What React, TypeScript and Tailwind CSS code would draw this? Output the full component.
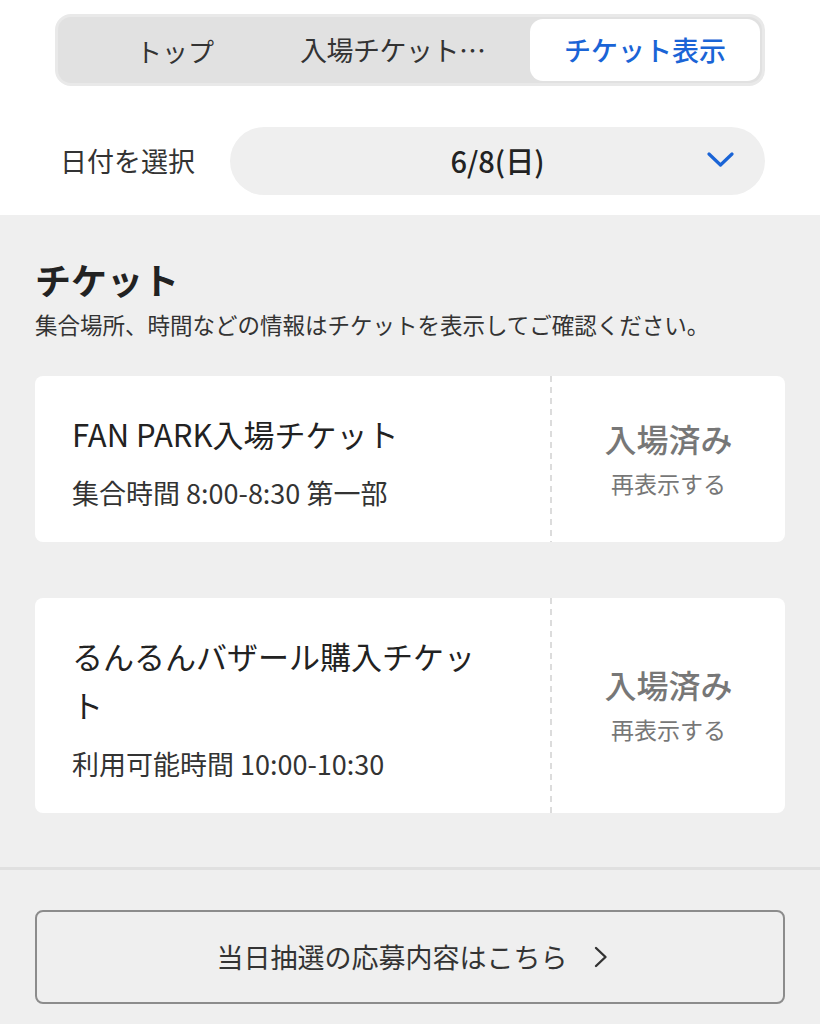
// チケット表示画面 — 日付ごとのチケット一覧

type Ticket = {
	id: string;
	title: string;
	sub: string;
	status: string;
};

const TICKETS: Ticket[] = [
	{
		id: "fanpark",
		title: "FAN PARK入場チケット",
		sub: "集合時間 8:00-8:30 第一部",
		status: "入場済み",
	},
	{
		id: "bazaar",
		title: "るんるんバザール購入チケット",
		sub: "利用可能時間 10:00-10:30",
		status: "入場済み",
	},
];

const FONT = "font-['Noto_Sans_CJK_JP','Noto_Sans',sans-serif]";

export default function App() {
	return (
		<div className={`${FONT} min-h-[1024px] w-[820px] bg-[#efefef] text-[#333]`}>
			{/* Header: tabs + date picker */}
			<div className="bg-white px-[55px] pt-[14px] pb-[20px]">
				<div className="flex h-[72px] rounded-[16px] border-[3px] border-[#e9e9e9] bg-[#e1e1e1] p-[2px]">
					<button className="flex-1 text-[26px] text-[#333]">トップ</button>
					<button className="flex-1 pl-[10px] text-left text-[27px] tracking-[-0.5px] text-[#333]">
						入場チケット…
					</button>
					<button className="flex-1 rounded-[13px] bg-white text-[27px] font-medium text-[#1a64d6]">
						チケット表示
					</button>
				</div>

				<div className="mt-[41px] flex items-center">
					<span className="-ml-[50px] w-[225px] pl-[55px] text-[27px] text-[#333]">
						日付を選択
					</span>
					<div className="relative flex h-[68px] flex-1 items-center justify-center rounded-full bg-[#efefef]">
						<span className="text-[29px] font-medium text-[#222]">6/8(日)</span>
						<svg
							width="27"
							height="16"
							viewBox="0 0 27 16"
							className="absolute right-[31px] top-[25px]"
						>
							<polyline
								points="2,2 13.5,13 25,2"
								fill="none"
								stroke="#1a64d6"
								strokeWidth="3.2"
								strokeLinecap="round"
								strokeLinejoin="round"
							/>
						</svg>
					</div>
				</div>
			</div>

			{/* Ticket list */}
			<div className="px-[35px] pt-[38px]">
				<h2 className="text-[36px] font-bold leading-[52px] text-[#222]">チケット</h2>
				<p className="mt-[3px] text-[22.5px] leading-[33px] text-[#333]">
					集合場所、時間などの情報はチケットを表示してご確認ください。
				</p>

				<div className="mt-[35px] flex flex-col gap-[56px]">
					{TICKETS.map((t) => (
						<TicketCard key={t.id} ticket={t} />
					))}
				</div>
			</div>

			<div className="mt-[54px] h-[3px] bg-[#e0e0e0]" />

			<div className="px-[35px] pt-[40px] pb-[20px]">
				<button className="flex h-[94px] w-full items-center justify-center gap-[26px] rounded-[8px] border-2 border-[#8c8c8c] pl-[4px] text-[27px] text-[#333]">
					<span>当日抽選の応募内容はこちら</span>
					<svg width="14" height="22" viewBox="0 0 14 22">
						<polyline
							points="2,2 11.5,11 2,20"
							fill="none"
							stroke="#333"
							strokeWidth="2.4"
							strokeLinecap="round"
							strokeLinejoin="round"
						/>
					</svg>
				</button>
			</div>
		</div>
	);
}

function TicketCard({ ticket }: { ticket: Ticket }) {
	return (
		<div className="flex rounded-[8px] bg-white">
			<div className="w-[515px] pl-[37px] pt-[33px] pb-[30px]">
				<p className="w-[415px] text-[31px] leading-[49px] text-[#222]">{ticket.title}</p>
				<p className="mt-[15px] text-[27px] leading-[39px] text-[#333]">{ticket.sub}</p>
			</div>
			<div className="w-[2px] bg-[repeating-linear-gradient(to_bottom,#dcdcdc_0,#dcdcdc_6px,transparent_6px,transparent_11px)]" />
			<div className="flex flex-1 flex-col items-center justify-center pt-[2px]">
				<span className="text-[32px] font-medium leading-[44px] text-[#777]">
					{ticket.status}
				</span>
				<span className="mt-[1px] text-[23px] leading-[44px] text-[#777]">再表示する</span>
			</div>
		</div>
	);
}
